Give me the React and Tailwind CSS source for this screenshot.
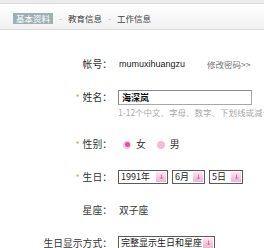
import React from "react";

function Star() {
  return <span className="text-[#cfa668] text-[9px] mr-[3px] leading-none">*</span>;
}

function Label({ children, required }) {
  return (
    <div className="w-[112px] flex justify-end items-center shrink-0">
      {required && <Star />}
      <span>{children}：</span>
    </div>
  );
}

function Select({ value, width }) {
  return (
    <div
      className={`h-[14px] border border-[#5a5a5a] bg-white flex items-stretch ${width}`}
    >
      <span className="flex-1 pl-[2px] leading-[12px] text-[9px] text-[#222] whitespace-nowrap overflow-hidden">
        {value}
      </span>
      <span className="w-[10px] shrink-0 m-[1px] bg-gradient-to-b from-[#fbe3ef] to-[#f0b5d2] flex items-center justify-center">
        <svg width="5" height="6" viewBox="0 0 5 6">
          <path d="M2.5 0.5V5M1 3.5L2.5 5L4 3.5" stroke="#c86aa0" strokeWidth="0.9" fill="none" />
        </svg>
      </span>
    </div>
  );
}

export default function App() {
  return (
    <div className="w-[264px] h-[248px] overflow-hidden bg-white text-[#333] text-[9.8px] font-['Noto_Sans_CJK_SC',sans-serif]">
      <div className="h-[3px] bg-[#ececec]" />
      <div className="h-[27px] border-t border-b border-[#dadada] bg-gradient-to-b from-white to-[#f1f1f1] flex items-center pl-[13px] text-[8.5px] text-[#444]">
        <span className="bg-[#9fb0b4] text-white px-[3px] h-[11px] leading-[11px] mt-[3px]">基本资料</span>
        <span className="text-[#bbb] mx-[6px] mt-[3px]">-</span>
        <span className="mt-[3px]">教育信息</span>
        <span className="text-[#bbb] mx-[6px] mt-[3px]">-</span>
        <span className="mt-[3px]">工作信息</span>
      </div>

      <div className="pt-[18px]">
        <div className="h-[33px] flex items-center">
          <Label>帐号</Label>
          <span className="ml-[7px] w-[88px] font-['Liberation_Sans',sans-serif] text-[9px] text-[#222]">
            mumuxihuangzu
          </span>
          <span className="text-[#777] text-[8.5px]">修改密码&gt;&gt;</span>
        </div>

        <div className="h-[47px] pt-[9px]">
          <div className="flex items-center h-[15px]">
            <Label required>姓名</Label>
            <div className="ml-[6px] w-[134px] h-[15px] border border-[#a8a8a8] border-t-[#888] border-l-[#888] flex items-center pl-[3px] font-bold text-[#111] text-[9px]">
              海深岚
            </div>
          </div>
          <div className="ml-[118px] mt-[2px] text-[8.5px] text-[#aaa] whitespace-nowrap leading-[11px]">
            1-12个中文、字母、数字、下划线或减号
          </div>
        </div>

        <div className="h-[33px] flex items-center">
          <Label required>性别</Label>
          <span className="ml-[11px] w-[8px] h-[8px] rounded-full bg-[#f6c8de] flex items-center justify-center">
            <span className="w-[5px] h-[5px] rounded-full bg-[#e0529a]" />
          </span>
          <span className="ml-[5px]">女</span>
          <span className="ml-[11px] w-[8px] h-[8px] rounded-full bg-[#f3bcd6]" />
          <span className="ml-[5px]">男</span>
        </div>

        <div className="h-[32px] flex items-center">
          <Label required>生日</Label>
          <div className="ml-[6px] flex gap-[4px]">
            <Select value="1991年" width="w-[50px]" />
            <Select value="6月" width="w-[33px]" />
            <Select value="5日" width="w-[34px]" />
          </div>
        </div>

        <div className="h-[34px] flex items-center">
          <Label>星座</Label>
          <span className="ml-[7px]">双子座</span>
        </div>

        <div className="h-[32px] flex items-center">
          <Label>生日显示方式</Label>
          <div className="ml-[6px]">
            <Select value="完整显示生日和星座" width="w-[97px]" />
          </div>
        </div>
      </div>
    </div>
  );
}
